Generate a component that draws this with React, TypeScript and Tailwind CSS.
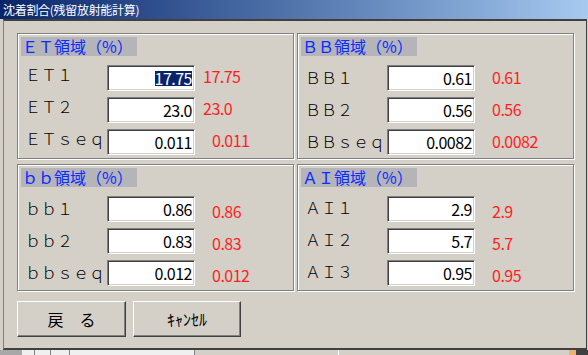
import React from 'react'

type Row = {
  label: string
  value: string
  red: string
  redGap: string
  selected?: boolean
}

type Group = {
  title: string
  labelShift: string
  redShift: string
  rows: Row[]
}

const groups: Group[] = [
  {
    title: 'ＥＴ領域（%）',
    labelShift: '-mt-[8px]',
    redShift: '-mt-[4px]',
    rows: [
      { label: 'ＥＴ１', value: '17.75', red: '17.75', redGap: 'ml-[8px]', selected: true },
      { label: 'ＥＴ２', value: '23.0', red: '23.0', redGap: 'ml-[8px]' },
      { label: 'ＥＴｓｅｑ', value: '0.011', red: '0.011', redGap: 'ml-[17px]' },
    ],
  },
  {
    title: 'ＢＢ領域（%）',
    labelShift: '-mt-[2px]',
    redShift: '-mt-[2px]',
    rows: [
      { label: 'ＢＢ１', value: '0.61', red: '0.61', redGap: 'ml-[17px]' },
      { label: 'ＢＢ２', value: '0.56', red: '0.56', redGap: 'ml-[17px]' },
      { label: 'ＢＢｓｅｑ', value: '0.0082', red: '0.0082', redGap: 'ml-[17px]' },
    ],
  },
  {
    title: 'ｂｂ領域（%）',
    labelShift: '-mt-[3px]',
    redShift: 'mt-[3px]',
    rows: [
      { label: 'ｂｂ１', value: '0.86', red: '0.86', redGap: 'ml-[17px]' },
      { label: 'ｂｂ２', value: '0.83', red: '0.83', redGap: 'ml-[17px]' },
      { label: 'ｂｂｓｅｑ', value: '0.012', red: '0.012', redGap: 'ml-[17px]' },
    ],
  },
  {
    title: 'ＡＩ領域（%）',
    labelShift: '-mt-[4px]',
    redShift: 'mt-[3px]',
    rows: [
      { label: 'ＡＩ１', value: '2.9', red: '2.9', redGap: 'ml-[17px]' },
      { label: 'ＡＩ２', value: '5.7', red: '5.7', redGap: 'ml-[17px]' },
      { label: 'ＡＩ３', value: '0.95', red: '0.95', redGap: 'ml-[17px]' },
    ],
  },
]

function GroupBox({ group, tall }: { group: Group; tall?: boolean }) {
  return (
    <div
      className={`border border-[#808080] shadow-[inset_1px_1px_0_#fff,1px_1px_0_#fff] pl-[3px] pt-[3px] ${
        tall ? 'h-[127px]' : 'h-[126px]'
      }`}
    >
      <div className="w-[116px] h-[19px] bg-[#b5b4b9] text-[#0a2cff] text-[16px] leading-[19px] pl-[1px] whitespace-nowrap">
        {group.title}
      </div>
      <div className="flex flex-col gap-[6px] mt-[9px]">
        {group.rows.map((row) => (
          <div key={row.label} className="flex items-center h-[26px]">
            <div className={`w-[86px] pl-[4px] text-[16px] leading-[18px] text-black font-light ${group.labelShift}`}>
              {row.label}
            </div>
            <div className="w-[88px] h-[26px] bg-white border border-t-[#808080] border-l-[#808080] border-r-white border-b-white shadow-[inset_1px_1px_0_#404040,inset_-1px_-1px_0_#d4d0c8] flex items-center justify-end pr-[2px]">
              <span
                className={`text-[16px] leading-[15px] tracking-[-0.5px] ${
                  row.selected ? 'bg-[#0a246a] text-white' : 'text-black'
                }`}
              >
                {row.value}
              </span>
            </div>
            <div className={`${row.redGap} ${group.redShift} text-[16px] leading-[18px] tracking-[-0.5px] text-[#ff1e1e]`}>
              {row.red}
            </div>
          </div>
        ))}
      </div>
    </div>
  )
}

export default function App() {
  return (
    <div
      className="w-[588px] h-[355px] bg-[#d4d0c8] flex flex-col overflow-hidden"
      style={{ fontFamily: "'Noto Sans CJK JP', 'Noto Sans', sans-serif" }}
    >
      {/* title bar */}
      <div className="h-[19px] bg-gradient-to-r from-[#0a246a] to-[#a6caf0] text-white text-[12px] leading-[19px] pl-[3px] whitespace-nowrap tracking-[-0.3px]">
        沈着割合(残留放射能計算)
      </div>

      <div className="h-[331px] pl-[3px] pr-[1px]">
        <div className="h-full border-l border-t-2 border-r border-b-2 border-l-[#808080] border-t-[#404040] border-r-[#404040] border-b-[#404040] pl-[13px] pt-[12px]">
          <div className="grid grid-cols-[277px_277px] gap-x-[3px] gap-y-[5px]">
            <GroupBox group={groups[0]} />
            <GroupBox group={groups[1]} />
            <GroupBox group={groups[2]} tall />
            <GroupBox group={groups[3]} tall />
          </div>

          <div className="flex gap-[7px] mt-[10px]">
            <button className="w-[109px] h-[36px] border border-t-white border-l-white border-r-[#404040] border-b-[#404040] shadow-[inset_-1px_-1px_0_#808080] text-[16px] text-black">
              戻　る
            </button>
            <button className="w-[108px] h-[36px] border border-t-white border-l-white border-r-[#404040] border-b-[#404040] shadow-[inset_-1px_-1px_0_#808080] text-[16px] text-black">
              ｷｬﾝｾﾙ
            </button>
          </div>
        </div>
      </div>

      {/* window underneath */}
      <div className="h-[5px] flex">
        <div className="w-[22px] bg-[#a8a8a8]" />
        <div className="w-[13px] bg-[#f0f0f0] border-r border-[#808080]" />
        <div className="w-[16px] bg-[#f0f0f0] border-r border-[#808080]" />
        <div className="w-[19px] bg-[#f0f0f0] border-r border-[#808080]" />
        <div className="w-[125px] bg-[#f0f0f0] border-r border-[#808080]" />
        <div className="w-[144px] bg-[#d4d0c8] border-r border-white" />
        <div className="w-[230px] bg-[#d4d0c8]" />
        <div className="w-[7px] bg-[#f0b070]" />
        <div className="flex-1 bg-[#404040]" />
      </div>
    </div>
  )
}
